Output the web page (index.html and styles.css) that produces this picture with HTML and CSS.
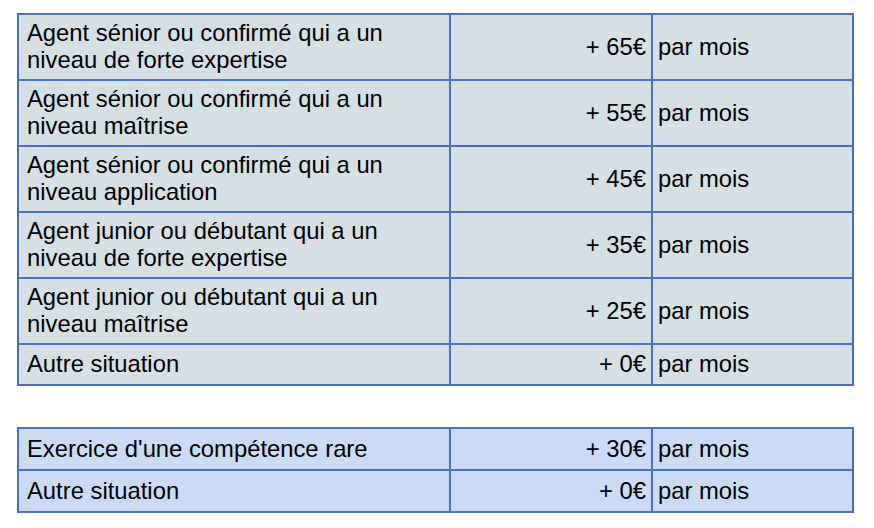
FILE: index.html
```html
<!DOCTYPE html>
<html lang="fr">
<head>
<meta charset="utf-8">
<link rel="stylesheet" href="styles.css">
</head>
<body>
<table class="grid grid-grey">
  <colgroup><col class="c1"><col class="c2"><col class="c3"></colgroup>
  <tr class="tall"><td>Agent sénior ou confirmé qui a un<br>niveau de forte expertise</td><td class="amt">+ 65€</td><td class="unit">par mois</td></tr>
  <tr class="tall"><td>Agent sénior ou confirmé qui a un<br>niveau maîtrise</td><td class="amt">+ 55€</td><td class="unit">par mois</td></tr>
  <tr class="tall"><td>Agent sénior ou confirmé qui a un<br>niveau application</td><td class="amt">+ 45€</td><td class="unit">par mois</td></tr>
  <tr class="tall"><td>Agent junior ou débutant qui a un<br>niveau de forte expertise</td><td class="amt">+ 35€</td><td class="unit">par mois</td></tr>
  <tr class="tall"><td>Agent junior ou débutant qui a un<br>niveau maîtrise</td><td class="amt">+ 25€</td><td class="unit">par mois</td></tr>
  <tr class="short"><td>Autre situation</td><td class="amt">+ 0€</td><td class="unit">par mois</td></tr>
</table>
<table class="grid grid-blue">
  <colgroup><col class="c1"><col class="c2"><col class="c3"></colgroup>
  <tr class="short2"><td>Exercice d'une compétence rare</td><td class="amt">+ 30€</td><td class="unit">par mois</td></tr>
  <tr class="short2"><td>Autre situation</td><td class="amt">+ 0€</td><td class="unit">par mois</td></tr>
</table>
</body>
</html>
```
FILE: styles.css
```css
html, body { background: #ffffff; }
body {
  margin: 0;
  padding: 13px 0 0 17px;
  font-family: "Liberation Sans", Arial, sans-serif;
  font-size: 23.8px;
  color: #000;
}
.grid {
  border-collapse: collapse;
  table-layout: fixed;
  width: 835px;
}
.grid + .grid { margin-top: 41px; }
.grid-grey { background: #d5dfe4; }
.grid-blue { background: #ccdbf5; }
.c1 { width: 432px; }
.c2 { width: 202px; }
.c3 { width: 201px; }
.grid td {
  border: 2px solid #4a70c2;
  padding: 0 6px 2px 8px;
  line-height: 27px;
  vertical-align: middle;
  white-space: nowrap;
}
.grid td.amt { text-align: right; padding-right: 5px; }
.grid td.unit { padding-left: 5px; }
.tall td { height: 62px; }
.short td { height: 37px; }
.short2 td { height: 38px; }
```
